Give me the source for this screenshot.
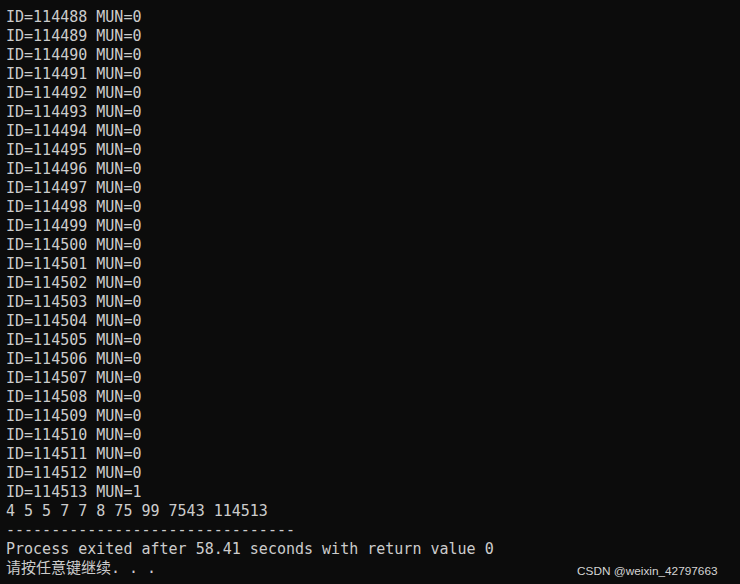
import React from "react";

export default function App() {
  const lines: string[] = [];
  for (let i = 114488; i <= 114512; i++) lines.push(`ID=${i} MUN=0`);
  lines.push("ID=114513 MUN=1");
  lines.push("4 5 5 7 7 8 75 99 7543 114513");
  lines.push("-".repeat(32));
  lines.push("Process exited after 58.41 seconds with return value 0");
  lines.push("请按任意键继续. . .");
  return (
    <div className="relative w-[740px] h-[584px] overflow-hidden bg-[#0c0c0c] text-[#cccccc]">
      <div
        className="pt-[8px] pl-[6px] text-[15px] leading-[19px] whitespace-pre"
        style={{ fontFamily: '"DejaVu Sans Mono", "Noto Sans CJK SC", monospace' }}
      >
        {lines.map((l, i) => (
          <div key={i} className="h-[19px]">
            {l}
          </div>
        ))}
      </div>
      <div
        className="absolute left-[577px] top-[564px] text-[11.8px] leading-[14px] text-[#d4d4d4]"
        style={{ fontFamily: '"Liberation Sans", Arial, sans-serif' }}
      >
        CSDN @weixin_42797663
      </div>
    </div>
  );
}
